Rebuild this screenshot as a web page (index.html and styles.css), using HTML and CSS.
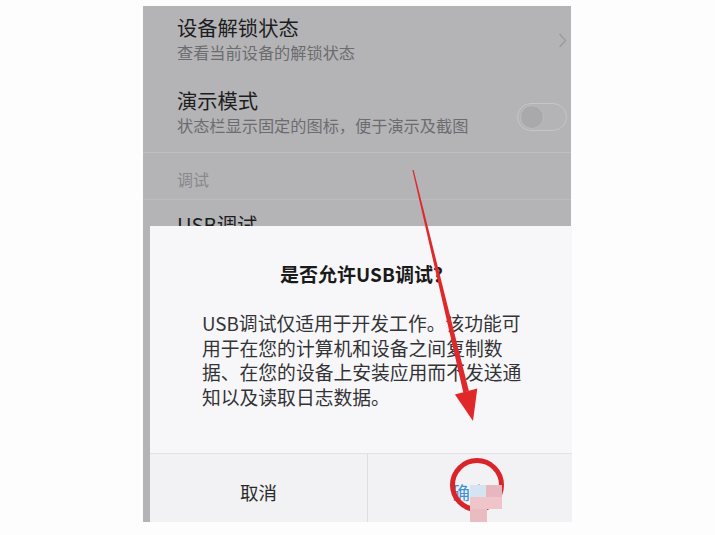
FILE: index.html
```html
<!DOCTYPE html>
<html lang="zh-CN">
<head>
<meta charset="utf-8">
<title>USB调试</title>
<link rel="stylesheet" href="styles.css">
</head>
<body>
<div class="stage">
  <div class="phone">
    <div class="row">
      <div class="row-text">
        <div class="row-title">设备解锁状态</div>
        <div class="row-sub">查看当前设备的解锁状态</div>
      </div>
      <svg class="chevron" width="9" height="15" viewBox="0 0 9 15"><path d="M1.5 1 L7.5 7.5 L1.5 14" fill="none" stroke="#9a9a9d" stroke-width="1.3"/></svg>
    </div>
    <div class="row">
      <div class="row-text">
        <div class="row-title">演示模式</div>
        <div class="row-sub">状态栏显示固定的图标，便于演示及截图</div>
      </div>
      <div class="toggle"><span class="knob"></span></div>
    </div>
    <div class="section">调试</div>
    <div class="row usb">
      <div class="row-title">USB调试</div>
    </div>

    <div class="dialog">
      <div class="dlg-title">是否允许USB调试？</div>
      <div class="dlg-body">USB调试仅适用于开发工作。该功能可<br>用于在您的计算机和设备之间复制数<br>据、在您的设备上安装应用而不发送通<br>知以及读取日志数据。</div>
      <div class="dlg-buttons">
        <div class="btn">取消</div>
        <div class="btn ok">确定</div>
      </div>
    </div>
  </div>
</div>

<svg class="annot" width="715" height="535" viewBox="0 0 715 535">
  <polygon points="412.4,170.1 413.6,169.9 468.9,391.0 463.3,392.4" fill="#e0282b"/>
  <polygon points="477.3,388.6 454.9,394.4 473,421" fill="#e0282b"/>
  <circle cx="477" cy="485" r="24.5" fill="none" stroke="#d9252a" stroke-width="5"/>
  <rect x="470" y="485" width="16" height="12" fill="#d6e4f2"/>
  <rect x="486" y="485" width="16" height="12" fill="#e8b6bd"/>
  <rect x="470" y="497" width="32" height="12" fill="#efc5cb"/>
  <rect x="470" y="509" width="17" height="13" fill="#e9bcc2"/>
</svg>
</body>
</html>
```
FILE: styles.css
```css
html, body {
  margin: 0;
  padding: 0;
}
body {
  width: 715px;
  height: 535px;
  background: #fdfdfd;
  overflow: hidden;
  position: relative;
  font-family: "Noto Sans CJK SC", "Noto Sans", sans-serif;
}
.stage {
  padding: 6px 0 0 143px;
}
.phone {
  position: relative;
  width: 428px;
  height: 516px;
  background: #b4b4b7;
}
.row {
  height: 73px;
  box-sizing: border-box;
  padding: 8px 4px 0 34px;
  display: flex;
  justify-content: space-between;
  align-items: flex-start;
}
.row-title {
  font-size: 20.3px;
  line-height: 26px;
  color: #1d1d1e;
}
.row-sub {
  margin-top: 2px;
  font-size: 16.2px;
  line-height: 20px;
  color: #6c6c6f;
}
.chevron {
  margin-top: 19px;
}
.toggle {
  margin-top: 16px;
  width: 46px;
  height: 26px;
  border: 1px solid #c6c6c9;
  border-radius: 14px;
  display: flex;
  align-items: center;
  padding-left: 2px;
  box-sizing: content-box;
}
.knob {
  width: 22px;
  height: 22px;
  border-radius: 50%;
  background: #a9a9ac;
  border: 1px solid #bdbdc0;
}
.section {
  height: 48px;
  box-sizing: border-box;
  border-top: 1px solid #bfbfc2;
  border-bottom: 1px solid #bcbcbf;
  padding: 16px 0 0 34px;
  font-size: 16px;
  line-height: 20px;
  color: #88888b;
}
.row.usb {
  padding-top: 11px;
}
.dialog {
  position: absolute;
  left: 7px;
  top: 220px;
  width: 422px;
  height: 296px;
  background: #f7f7f9;
  display: flex;
  flex-direction: column;
}
.dlg-title {
  padding: 34px 42px 0 52px;
  text-align: center;
  font-size: 19px;
  line-height: 28px;
  font-weight: bold;
  color: #1a1a1a;
}
.dlg-body {
  margin-top: 23px;
  padding: 0 20px 0 52px;
  font-size: 18.8px;
  line-height: 24.7px;
  color: #333335;
  white-space: nowrap;
}
.dlg-buttons {
  margin-top: auto;
  height: 68px;
  border-top: 1px solid #e2e2e4;
  background: #f2f2f4;
  display: grid;
  grid-template-columns: 217px 1fr;
}
.btn {
  padding-top: 26px;
  text-align: center;
  font-size: 18.5px;
  line-height: 24px;
  color: #2a2a2c;
}
.btn.ok {
  border-left: 1px solid #dedee0;
  color: #3f8fdc;
}
.annot {
  position: absolute;
  left: 0;
  top: 0;
  pointer-events: none;
}
```
